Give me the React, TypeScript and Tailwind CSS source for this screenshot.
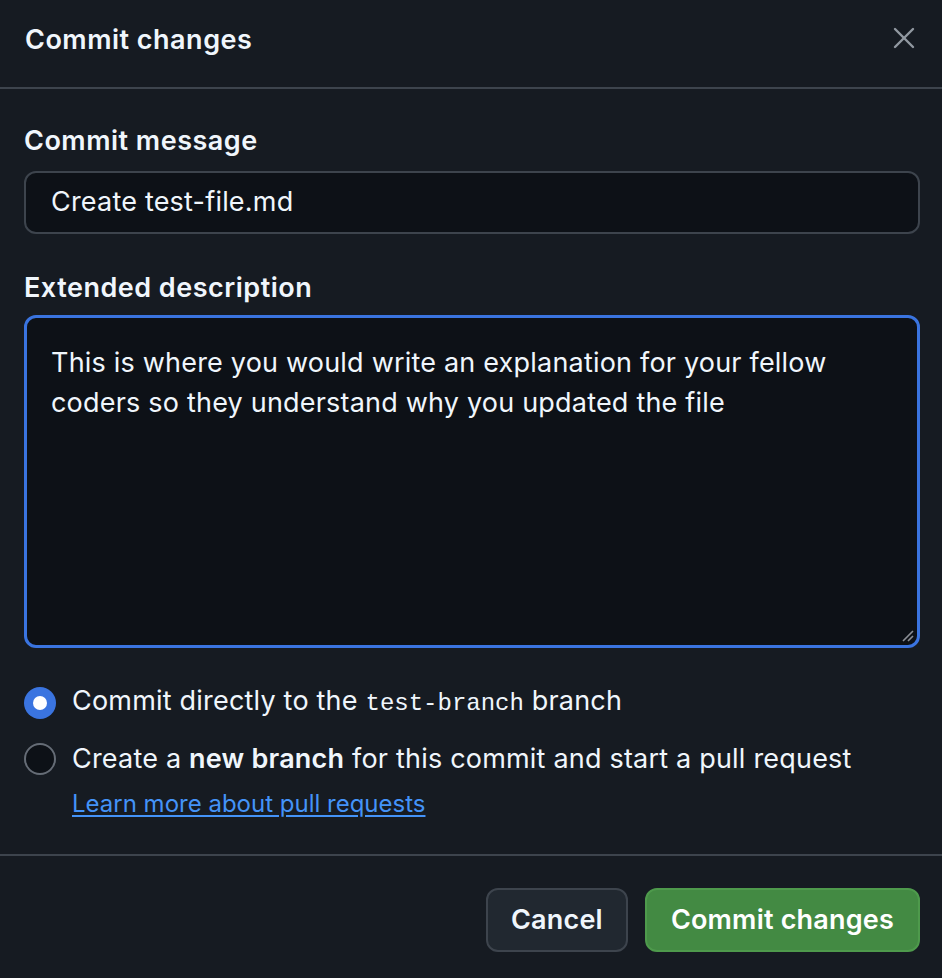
import { X } from 'lucide-react';

const CommitDialog = () => {
  return (
    <div
      className="min-h-[978px] w-[942px] bg-[#161b22] text-[#f0f6fc]"
      style={{ fontFamily: 'Inter, "Noto Sans", sans-serif' }}
    >
      {/* Header */}
      <div className="flex h-[89px] items-start justify-between border-b-2 border-[#3d444d] pl-[25px] pr-[20px] pt-[22px]">
        <h1 className="text-[27px] font-semibold leading-[36px] tracking-[0.5px]">Commit changes</h1>
        <button className="-mt-[2px] text-[#9198a1]" aria-label="Close">
          <X size={36} strokeWidth={1.6} />
        </button>
      </div>

      {/* Body */}
      <div className="pl-[24px] pr-[22px] pt-[36px] text-[27px] tracking-[0.2px]">
        <label className="block font-semibold leading-[32px] tracking-[0.5px]">Commit message</label>
        <div className="mt-[14px] flex h-[63px] items-center rounded-[12px] border-2 border-[#3d444d] bg-[#0d1117] px-[25px]">
          Create test-file.md
        </div>

        <label className="mt-[38px] block font-semibold leading-[32px] tracking-[0.5px]">Extended description</label>
        <div className="relative mt-[11px] h-[333px] rounded-[12px] border-[3px] border-[#3a74e0] bg-[#0d1117] px-[24px] pt-[25px] leading-[40px]">
          This is where you would write an explanation for your fellow coders so they understand why you updated the file
          <svg className="absolute bottom-[2px] right-[2px]" width="14" height="14" viewBox="0 0 14 14">
            <path d="M2 12 L12 2 M7 12 L12 7" stroke="#8b8f96" strokeWidth="1.6" />
          </svg>
        </div>

        {/* Radios */}
        <div className="mt-[37px] flex items-center gap-[16px]">
          <span className="flex h-[32px] w-[32px] items-center justify-center rounded-full bg-[#3a74e0]">
            <span className="h-[14px] w-[14px] rounded-full bg-white" />
          </span>
          <span className="leading-[32px]">
            Commit directly to the{' '}
            <span className="text-[24px] tracking-normal" style={{ fontFamily: '"Liberation Mono", monospace' }}>test-branch</span>{' '}
            branch
          </span>
        </div>
        <div className="mt-[23px] flex items-center gap-[16px]">
          <span className="h-[32px] w-[32px] rounded-full border-2 border-[#656c76] bg-[#0d1117]" />
          <span className="leading-[32px]">
            Create a <span className="font-semibold">new branch</span> for this commit and start a pull request
          </span>
        </div>
        <a href="#" className="ml-[48px] mt-[14px] block text-[24px] leading-[30px] tracking-normal text-[#4493f8] underline underline-offset-[3px]">
          Learn more about pull requests
        </a>
      </div>

      {/* Footer */}
      <div className="mt-[35px] flex justify-end gap-[17px] border-t-2 border-[#3d444d] px-[22px] pt-[32px] text-[27px] tracking-[0.2px]">
        <button className="h-[64px] rounded-[12px] border-2 border-[#3d444d] bg-[#212830] px-[23px] font-semibold">
          Cancel
        </button>
        <button className="h-[64px] rounded-[12px] border-2 border-[#4e9a4c] bg-[#438a43] px-[24px] font-semibold text-white">
          Commit changes
        </button>
      </div>
    </div>
  );
};

export default function App() {
  return <CommitDialog />;
}
